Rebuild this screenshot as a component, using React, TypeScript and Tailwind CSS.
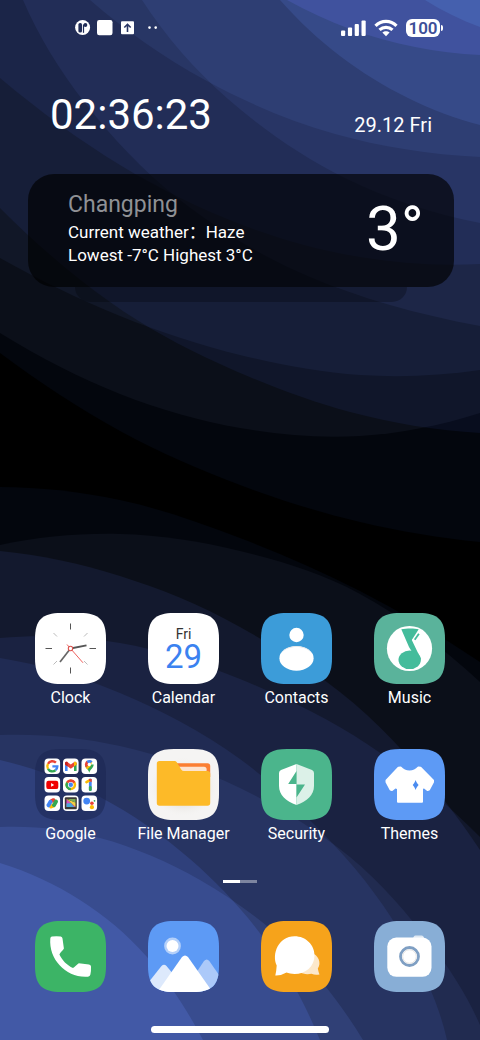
import React from "react";

type Point = [number, number];

/* ---------- Wallpaper ---------- */

// Continues a, b, c one step past a, keeping the bend.
function before(a: Point, b: Point, c: Point): Point {
  return [3 * a[0] - 3 * b[0] + c[0], 3 * a[1] - 3 * b[1] + c[1]];
}

// Smooth line through a list of points.
function curve(points: Point[]): string {
  const n = points.length;
  const all = [
    before(points[0], points[1], points[2]),
    ...points,
    before(points[n - 1], points[n - 2], points[n - 3]),
  ];
  let d = `M${points[0][0]} ${points[0][1]}`;
  for (let i = 1; i < n; i++) {
    const [p0, p1, p2, p3] = [all[i - 1], all[i], all[i + 1], all[i + 2]];
    const c1 = [p1[0] + (p2[0] - p0[0]) / 6, p1[1] + (p2[1] - p0[1]) / 6];
    const c2 = [p2[0] - (p3[0] - p1[0]) / 6, p2[1] - (p3[1] - p1[1]) / 6];
    d += ` C${c1[0]} ${c1[1]} ${c2[0]} ${c2[1]} ${p2[0]} ${p2[1]}`;
  }
  return d;
}

// Each wave adds its own light to the ones below it.
const topWaves: { fill: string; points: Point[] }[] = [
  { fill: "#03060d", points: [[0, 353], [120, 431], [240, 485], [360, 522], [480, 542]] },
  { fill: "#08090c", points: [[0, 333], [120, 394], [240, 428], [360, 436], [480, 413]] },
  { fill: "#050711", points: [[0, 208], [110, 302], [220, 364], [350, 412], [480, 433]] },
  { fill: "#06080e", points: [[0, 258], [120, 316], [240, 355], [360, 375], [480, 370]] },
  { fill: "#07080f", points: [[23, 0], [85, 103], [180, 200], [310, 277], [480, 326]] },
  { fill: "#050710", points: [[0, 78], [120, 165], [240, 224], [360, 257], [480, 264]] },
  { fill: "#06080e", points: [[142, 0], [228, 99], [345, 178], [480, 223]] },
  { fill: "#06090e", points: [[90, 0], [205, 80], [335, 134], [480, 157]] },
  { fill: "#080c15", points: [[280, 0], [340, 56], [408, 98], [480, 125]] },
  { fill: "#0a0816", points: [[287, 0], [350, 29], [415, 47], [480, 55]] },
  { fill: "#050e10", points: [[425, 0], [452, 15], [480, 27]] },
];

const bottomWaves: { fill: string; points: Point[] }[] = [
  { fill: "#03060d", points: [[0, 487], [120, 500], [240, 538], [360, 591], [480, 662]] },
  { fill: "#08090c", points: [[0, 545], [120, 534], [240, 551], [360, 594], [480, 682]] },
  { fill: "#080a15", points: [[0, 551], [120, 576], [240, 627], [367, 715], [480, 850]] },
  { fill: "#070913", points: [[0, 638], [120, 643], [240, 679], [367, 744], [480, 837]] },
  { fill: "#060912", points: [[0, 658], [120, 693], [240, 759], [345, 857], [412, 952], [447, 1040]] },
  { fill: "#07090f", points: [[0, 735], [120, 746], [240, 788], [350, 857], [430, 943], [480, 1025]] },
  { fill: "#080c19", points: [[0, 760], [100, 797], [190, 859], [265, 940], [320, 1040]] },
  { fill: "#090c14", points: [[0, 827], [100, 838], [200, 880], [290, 947], [363, 1040]] },
  { fill: "#0a0d17", points: [[0, 863], [80, 900], [147, 957], [203, 1040]] },
];

function Wallpaper() {
  return (
    <svg
      className="absolute inset-0 -z-10 isolate h-full w-full"
      viewBox="0 0 480 1040"
      preserveAspectRatio="xMidYMid slice"
      aria-hidden="true"
    >
      <rect width="480" height="1040" fill="#000" />
      {topWaves.map((w, i) => (
        <path key={`t${i}`} className="mix-blend-plus-lighter" fill={w.fill} d={`${curve(w.points)} L480 0 L0 0 Z`} />
      ))}
      {bottomWaves.map((w, i) => (
        <path key={`b${i}`} className="mix-blend-plus-lighter" fill={w.fill} d={`${curve(w.points)} L480 1040 L0 1040 Z`} />
      ))}
    </svg>
  );
}

/* ---------- Icon shapes ---------- */

const SQUIRCLE =
  "M0 26C0 7 7 0 26 0H45C64 0 71 7 71 26V45C71 64 64 71 45 71H26C7 71 0 64 0 45Z";

function Tile({ fill, children }: { fill: string; children?: React.ReactNode }) {
  return (
    <svg className="block size-[71px]" viewBox="0 0 71 71" aria-hidden="true">
      <path d={SQUIRCLE} fill={fill} />
      {children}
    </svg>
  );
}

function ClockIcon() {
  return (
    <Tile fill="#fff">
      <g stroke="#555" strokeWidth="1">
        <path d="M35.5 10.5V16.500M35.5 54.500V60.500M10.500 35.500H17M54.500 35.500H61" />
        <path stroke="#bbb" d="M18.500 20L22 23.500M52.500 20L49 23.500M18.500 51.500L22 48M52.500 51.500L49 48" />
      </g>
      <path d="M35.5 35.5L51.5 32.3" stroke="#555" strokeWidth="1.8" />
      <path d="M35.5 35.5L25 49" stroke="#666" strokeWidth="1.7" />
      <path d="M32 31.5L48 49.8" stroke="#f0625f" strokeWidth="1" />
      <circle cx="35.5" cy="35.5" r="2.2" fill="#fff" stroke="#d9534f" strokeWidth="1.1" />
    </Tile>
  );
}

function CalendarIcon() {
  return (
    <span className="grid size-[71px]">
      <span className="col-start-1 row-start-1">
        <Tile fill="#fff" />
      </span>
      <span className="col-start-1 row-start-1 flex flex-col items-center pt-3">
        <span className="text-[14px] leading-[18px] text-[#333]">Fri</span>
        <span className="text-[33px] leading-[28px] text-[#3b82f0]">29</span>
      </span>
    </span>
  );
}

function ContactsIcon() {
  return (
    <Tile fill="#3c9cd9">
      <circle cx="35.5" cy="22" r="7.2" fill="#fff" />
      <ellipse cx="35.5" cy="45.3" rx="17.1" ry="12.4" fill="#fff" />
      <path d="M20 41C24 30.500 47 30.500 51 41C46 31.800 25 31.800 20 41Z" fill="#dfe3e6" />
    </Tile>
  );
}

function MusicIcon() {
  return (
    <Tile fill="#5ab39b">
      <circle cx="35.5" cy="35.5" r="22.600" fill="#fff" />
      <path d="M27.300 16.300C32 15.300 40 15 44.700 16.300L37.800 27L46.900 46L43 47L35 34Z" fill="#44bc9b" />
      <ellipse cx="35.700" cy="46.800" rx="11.200" ry="9.300" fill="#44bc9b" />
      <path d="M38.900 26.800L45 18.500" stroke="#fff" strokeWidth="1" />
      <path d="M40.700 26.800L44.900 20.800" stroke="#44bc9b" strokeWidth="1.800" />
    </Tile>
  );
}

function MiniTile({ x, y, children }: { x: number; y: number; children: React.ReactNode }) {
  return (
    <g transform={`translate(${x} ${y})`}>
      <rect width="15.600" height="15.600" rx="4" fill="#fff" />
      {children}
    </g>
  );
}

function GoogleFolderIcon() {
  return (
    <svg className="block size-[71px]" viewBox="0 0 71 71" aria-hidden="true">
      <path d={SQUIRCLE} fill="#1a2450" fillOpacity="0.5" />
      <MiniTile x={9.500} y={9.500}>
        <g fill="none" strokeWidth="2.400">
          <path d="M11.400 4.200A5 5 0 0 0 3.500 5.300" stroke="#ea4335" />
          <path d="M3.500 5.300A5 5 0 0 0 3.500 10.300" stroke="#fbbc04" />
          <path d="M3.500 10.300A5 5 0 0 0 11 11.700" stroke="#34a853" />
          <path d="M11 11.700A5 5 0 0 0 12.800 7.900H7.900" stroke="#4285f4" />
        </g>
      </MiniTile>
      <MiniTile x={28} y={9.500}>
        <path d="M2 4.500V12.500H4.600V6.500Z" fill="#4285f4" />
        <path d="M13.600 4.500V12.500H11V6.500Z" fill="#34a853" />
        <path d="M2 4.200C2.600 3 3.900 3 4.700 3.700L7.800 6.100L10.900 3.700C11.700 3 13 3 13.600 4.200V6L7.800 10.200L2 6Z" fill="#ea4335" />
        <path d="M11 3.700C12 2.800 13.600 3.300 13.600 5V6L11 8Z" fill="#fbbc04" />
        <path d="M2 5C2 3.300 3.600 2.800 4.600 3.700V8L2 6Z" fill="#c5221f" />
      </MiniTile>
      <MiniTile x={46.500} y={9.500}>
        <path d="M7.800 14.200C7 11 3.600 9.500 3.400 6L7.800 6L12.200 6C12.100 9.500 8.600 11 7.800 14.200Z" fill="#34a853" />
        <path d="M3.400 6C3.400 4.500 4.200 3.100 5.300 2.300L8 5.500L4.400 9.200C3.800 8.200 3.400 7.300 3.400 6Z" fill="#ea4335" />
        <path d="M5 2.500C6.800 1 9.500 1.200 11 2.900L7.800 6.500Z" fill="#4285f4" />
        <path d="M4.400 9.200L11 2.900L8.800 8L5.700 10.900Z" fill="#fbbc04" />
        <circle cx="7.800" cy="6" r="1.700" fill="#fff" />
      </MiniTile>
      <MiniTile x={9.500} y={28}>
        <rect x="1.800" y="3.700" width="12" height="8.400" rx="2.200" fill="#f00000" />
        <path d="M6.600 6.100V9.700L9.700 7.900Z" fill="#fff" />
      </MiniTile>
      <MiniTile x={28} y={28}>
        <circle cx="7.800" cy="7.800" r="5.400" fill="#fbbc04" />
        <path d="M7.800 7.800L3.100 5.100A5.400 5.400 0 0 1 12.500 5.100Z" fill="#ea4335" />
        <path d="M7.800 7.800L3.100 5.100A5.400 5.400 0 0 0 7.800 13.200Z" fill="#34a853" />
        <circle cx="7.800" cy="7.800" r="2.900" fill="#fff" />
        <circle cx="7.800" cy="7.800" r="2.200" fill="#4285f4" />
      </MiniTile>
      <MiniTile x={46.500} y={28}>
        <path d="M8.800 3V12.700" stroke="#4285f4" strokeWidth="2.800" strokeLinecap="round" />
        <path d="M8.800 10.500V12.700" stroke="#34a853" strokeWidth="2.800" strokeLinecap="round" />
        <path d="M5 5.200L8.500 3.200" stroke="#fbbc04" strokeWidth="2.700" strokeLinecap="round" />
        <path d="M7.400 2H10.200V5.200L7.400 3.800Z" fill="#ea4335" />
      </MiniTile>
      <MiniTile x={9.500} y={46.500}>
        <g strokeLinecap="round" strokeWidth="4" fill="none">
          <path d="M7 5.500L9 4.700" stroke="#ea4335" />
          <path d="M6.500 11L9.200 9.800" stroke="#fbbc04" />
          <path d="M11.500 6L9.500 9.600" stroke="#34a853" />
          <path d="M4 9.800L6 6.300" stroke="#4285f4" />
        </g>
      </MiniTile>
      <MiniTile x={28} y={46.500}>
        <rect x="1.800" y="1.800" width="12" height="12" rx="1" fill="#3a3936" />
        <path d="M3.500 3.500L12.500 11.500H3.500Z" fill="#d94fc0" />
        <path d="M3.500 3.500L12.500 7V11.500Z" fill="#f1cf43" />
        <path d="M3.500 8L8 7.500L11 11.500H3.500Z" fill="#49a9d8" />
        <path d="M5 3.500H12.500V7L8 5.200Z" fill="#7cae56" />
      </MiniTile>
      <MiniTile x={46.500} y={46.500}>
        <circle cx="5.200" cy="5.600" r="3.400" fill="#4285f4" />
        <circle cx="10.400" cy="7.700" r="1.800" fill="#ea4335" />
        <circle cx="13" cy="5.300" r="0.900" fill="#34a853" />
        <circle cx="10.400" cy="11.700" r="2.100" fill="#fbbc04" />
      </MiniTile>
    </svg>
  );
}

function FileManagerIcon() {
  return (
    <Tile fill="#f5f4f3">
      <defs>
        <radialGradient id="folder-shadow">
          <stop offset="0.5" stopColor="#d9d5cc" />
          <stop offset="1" stopColor="#f5f4f3" stopOpacity="0" />
        </radialGradient>
      </defs>
      <ellipse cx="35.5" cy="38" rx="35" ry="30" fill="url(#folder-shadow)" fillOpacity="0.7" />
      <path d="M28 14.200H59.500Q62.200 14.200 62.200 17V28H28Z" fill="#fb7e32" />
      <path d="M30 17.800H56Q58.600 17.800 58.600 20.300V26H30Z" fill="#fde3cf" />
      <path d="M11.500 12H26.500Q28 12 28.800 13.200L33.200 20.500Q34.200 22 36 22H59.500Q62.200 22 62.200 24.700V54Q62.200 56.800 59.500 56.800H11.500Q8.800 56.800 8.800 54V14.700Q8.800 12 11.500 12Z" fill="#fdba28" />
    </Tile>
  );
}

function SecurityIcon() {
  return (
    <Tile fill="#4bb58c">
      <path d="M35.500 15L20 21Q18 21.800 18 24V37C18 46 25 52.500 35.500 56Z" fill="#fff" />
      <path d="M35.500 15L51 21Q53 21.800 53 24V37C53 46 46 52.500 35.500 56Z" fill="#dcf1e8" />
      <path d="M35.500 22V35H27.200ZM35.500 35.500H44L35.500 48.500Z" fill="#4bb58c" />
    </Tile>
  );
}

function ThemesIcon() {
  return (
    <Tile fill="#5d9af5">
      <path
        d="M26.500 18.500C31 23.800 40 23.800 44.500 18.500L46.500 18.800L59 31.500V33L55 40.500L53.500 41L50 38.200L48 39.500V52.800H24V39.500L21.500 38.200L18 41L16.500 40.500L12.500 33V31.500L24.500 18.800Z"
        fill="#fff"
        stroke="#fff"
        strokeWidth="2"
        strokeLinejoin="round"
      />
      <path d="M41.600 31C42.500 33.500 43.500 34.800 44.600 36C43.500 37.200 42.500 38.500 41.600 41C40.700 38.500 39.800 37.200 38.700 36C39.800 34.800 40.700 33.500 41.600 31Z" fill="#4b8cf0" />
    </Tile>
  );
}

function PhoneIcon() {
  return (
    <Tile fill="#3cb466">
      <path
        d="M17 15.500Q22 14.800 25.800 15.600Q27.300 15.900 27.500 17.500L28.900 27.500C28 29.500 25.500 31 24.400 33.500C27 39 32 44.500 38 47C40 45.800 41.500 44 43.800 42.300L54 43.400Q56 43.600 56 45.500Q56.200 50 55.400 53.500Q55 55.500 53 55.700C32 57.500 13.500 39 15.300 17.500Q15.500 15.700 17 15.500Z"
        fill="#fff"
      />
    </Tile>
  );
}

function GalleryIcon() {
  return (
    <Tile fill="#5d9af5">
      <clipPath id="gallery-clip">
        <path d={SQUIRCLE} />
      </clipPath>
      <g clipPath="url(#gallery-clip)">
        <circle cx="24.500" cy="25" r="8.400" fill="#b4d0fa" />
        <circle cx="24.500" cy="25" r="6" fill="#fff" />
        <path d="M0 62L13.500 45Q16 42.300 18.500 45L40 71H0Z" fill="#dde9fc" />
        <path d="M40 64L56 40Q58.700 37 61.300 40L73 57V71H40Z" fill="#acc9f9" />
        <path d="M9.500 71L34 36Q37 32.800 40 36L64.500 71Z" fill="#fff" />
      </g>
    </Tile>
  );
}

function MessagesIcon() {
  return (
    <Tile fill="#f6a31b">
      <path d="M50 32C57 33 61 42 56.800 47.500Q57.500 51 58.500 53.500Q54 54.500 50.500 52.700C46 53.800 42 53 38 51Z" fill="#fce8cb" />
      <path d="M33.500 15.300C45 15.300 53.500 24 53.500 34.500C53.500 45.500 44.500 53 33.500 53C30.500 53 27.500 52.200 25.500 51.500Q20 54.800 14.300 54.500Q15.300 51 15.700 44.500C10.500 33 17.500 15.300 33.500 15.300Z" fill="#fff" />
    </Tile>
  );
}

function CameraIcon() {
  return (
    <Tile fill="#88aed6">
      <path d="M38.500 18L40 15.200Q40.300 14.500 41.500 14.500H47.500Q48.700 14.500 49.200 15.300L51 18Z" fill="#dfe9f3" />
      <rect x="13.300" y="16.500" width="44.200" height="39.300" rx="9" fill="#fff" />
      <circle cx="35.500" cy="35.500" r="9" fill="#fff" stroke="#7f9fc3" strokeWidth="2.800" />
      <circle cx="35.500" cy="35.500" r="6.800" fill="none" stroke="#e6e4e2" strokeWidth="1" />
    </Tile>
  );
}

/* ---------- Status bar ---------- */

function StatusBar() {
  return (
    <header className="flex h-14 items-center justify-between pr-[37px] pl-[75px]">
      <svg className="h-4 w-[84px]" viewBox="0 0 84 16" aria-hidden="true">
        <circle cx="7.600" cy="7.500" r="7.500" fill="#fff" />
        <rect x="3.400" y="3" width="3.600" height="9.500" rx="1.600" fill="#222e58" />
        <path d="M8.500 12.800V4.500" stroke="#222e58" strokeWidth="1.200" />
        <circle cx="10.400" cy="5" r="1.900" fill="#222e58" />
        <rect x="22" y="0" width="15.500" height="15.200" rx="2.200" fill="#fff" />
        <rect x="46" y="1.200" width="13" height="13" rx="1" fill="#fff" />
        <path d="M52.500 12V4.500M49.300 7.500L52.500 4.300L55.700 7.500" fill="none" stroke="#283565" strokeWidth="1.600" />
        <circle cx="74.500" cy="7.600" r="1.300" fill="#fff" />
        <circle cx="80.700" cy="7.600" r="1.300" fill="#fff" />
      </svg>
      <div className="flex items-center gap-2">
        <svg className="h-[18px] w-[26px]" viewBox="0 0 26 18" fill="#fff" aria-hidden="true">
          <rect x="1" y="11.500" width="4.200" height="5.500" rx="1" />
          <rect x="7.900" y="8.500" width="4.200" height="8.500" rx="1" />
          <rect x="14.700" y="5" width="4.200" height="12" rx="1" />
          <rect x="21.500" y="1.500" width="4.200" height="15.500" rx="1" />
        </svg>
        <svg className="h-[18px] w-6" viewBox="0 0 24 18" aria-hidden="true">
          <g fill="none" stroke="#fff" strokeWidth="3.200">
            <path d="M1.500 6.800C7.500 0.900 16.500 0.900 22.500 6.800" />
            <path d="M5.500 10.900C9.300 7.400 14.700 7.400 18.500 10.900" />
          </g>
          <path d="M12 17.200L8.400 13.600C10.400 11.700 13.600 11.700 15.600 13.600Z" fill="#fff" />
        </svg>
        <div className="flex items-center gap-px">
          <span className="flex h-[18px] w-[34px] items-center justify-center rounded-md bg-white text-[17px] leading-[18px] font-semibold text-[#3d4f98]">
            100
          </span>
          <span className="h-[6px] w-[2px] rounded-r-full bg-white" />
        </div>
      </div>
    </header>
  );
}

/* ---------- Home screen ---------- */

const apps = [
  { name: "Clock", Icon: ClockIcon },
  { name: "Calendar", Icon: CalendarIcon },
  { name: "Contacts", Icon: ContactsIcon },
  { name: "Music", Icon: MusicIcon },
  { name: "Google", Icon: GoogleFolderIcon },
  { name: "File Manager", Icon: FileManagerIcon },
  { name: "Security", Icon: SecurityIcon },
  { name: "Themes", Icon: ThemesIcon },
];

const dock = [
  { name: "Phone", Icon: PhoneIcon },
  { name: "Gallery", Icon: GalleryIcon },
  { name: "Messages", Icon: MessagesIcon },
  { name: "Camera", Icon: CameraIcon },
];

export default function App() {
  return (
    <div className="relative isolate flex min-h-screen flex-col overflow-hidden bg-black font-['Roboto','Noto_Sans_CJK_SC',sans-serif] text-white">
      <Wallpaper />
      <StatusBar />

      <main className="flex flex-1 flex-col">
        <div className="flex items-end justify-between pt-[35px] pr-12 pl-[50px]">
          <time className="text-[42px] leading-[48px]">02:36:23</time>
          <time className="mb-0.5 text-[20px] leading-6">29.12 Fri</time>
        </div>

        <section className="mt-[35px] mr-[26px] ml-7" aria-label="Weather">
          <div className="flex items-center justify-between rounded-[26px] bg-black/65 pt-[17px] pr-[30px] pb-5 pl-10">
            <div>
              <h2 className="text-[23px] leading-7 text-[#8f9195]">Changping</h2>
              <p className="mt-0.5 text-[17px] leading-[23px]">Current weather：Haze</p>
              <p className="text-[17px] leading-[23px]">Lowest -7°C Highest 3°C</p>
            </div>
            <p className="text-[62px] leading-[64px]">3°</p>
          </div>
          <div className="mx-[47px] h-[15px] rounded-b-[20px] bg-black/25" />
        </section>

        <nav className="mt-auto grid grid-cols-4 gap-y-[41px] px-3.5 pt-10" aria-label="Apps">
          {apps.map(({ name, Icon }) => (
            <button key={name} type="button" className="flex flex-col items-center">
              <Icon />
              <span className="mt-1 text-[16px] leading-5 whitespace-nowrap">{name}</span>
            </button>
          ))}
        </nav>

        <div className="mx-auto mt-9 flex h-[3px] w-[34px]">
          <span className="flex-1 bg-white" />
          <span className="flex-1 bg-white/40" />
        </div>

        <nav className="mt-[38px] grid grid-cols-4 px-3.5" aria-label="Dock">
          {dock.map(({ name, Icon }) => (
            <button key={name} type="button" aria-label={name} className="flex flex-col items-center">
              <Icon />
            </button>
          ))}
        </nav>

        <div className="mx-auto mt-[34px] mb-[7px] h-[7px] w-[178px] rounded-full bg-white" />
      </main>
    </div>
  );
}
